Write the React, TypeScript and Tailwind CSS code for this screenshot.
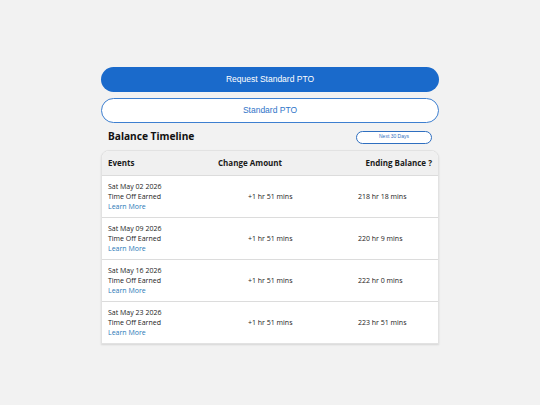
const rows = [
  { date: 'Sat May 02 2026', change: '+1 hr 51 mins', balance: '218 hr 18 mins' },
  { date: 'Sat May 09 2026', change: '+1 hr 51 mins', balance: '220 hr 9 mins' },
  { date: 'Sat May 16 2026', change: '+1 hr 51 mins', balance: '222 hr 0 mins' },
  { date: 'Sat May 23 2026', change: '+1 hr 51 mins', balance: '223 hr 51 mins' },
];

export default function App() {
  return (
    <div className="min-h-[405px] w-[540px] bg-[#f2f2f2] pt-[67px] font-['Open_Sans',sans-serif]">
      <div className="mx-auto w-[338px]">
        <button className="flex h-[25px] w-full items-center justify-center rounded-full bg-[#1a6acb] font-['Liberation_Sans',sans-serif] text-[8.5px] text-white">
          Request Standard PTO
        </button>
        <button className="mt-[6px] flex h-[25px] w-full items-center justify-center rounded-full border border-[#3d7fd0] bg-white font-['Liberation_Sans',sans-serif] text-[8.5px] text-[#2f74c8]">
          Standard PTO
        </button>

        <div className="mt-[4px] flex h-[20px] items-center justify-between px-[7px]">
          <h3 className="font-['Noto_Sans',sans-serif] text-[10.2px] font-bold text-[#111]">Balance Timeline</h3>
          <button className="flex h-[13px] w-[76px] items-center justify-center rounded-full border border-[#2f6fc0] bg-white font-['Liberation_Sans',sans-serif] text-[5px] text-[#2f6fc0]">
            Next 30 Days
          </button>
        </div>

        <div className="mt-[3px] overflow-hidden rounded-t-[8px] border border-[#e2e2e2] bg-white shadow-[0_1px_2px_rgba(0,0,0,0.12)]">
          <div className="flex h-[24px] items-center bg-[#f0f0f0] px-[6px] text-[8px] font-bold text-[#1a1a1a]">
            <span className="w-[110px]">Events</span>
            <span>Change Amount</span>
            <span className="flex-1 text-right">Ending Balance ?</span>
          </div>
          {rows.map((r) => (
            <div
              key={r.date}
              className="flex h-[42px] items-center border-t border-[#dcdcdc] px-[6px] text-[7px] leading-[10px] text-[#222]"
            >
              <div className="w-[140px]">
                <div>{r.date}</div>
                <div>Time Off Earned</div>
                <div className="text-[#2a7ab8]">Learn More</div>
              </div>
              <div className="w-[110px]">{r.change}</div>
              <div className="flex-1">{r.balance}</div>
            </div>
          ))}
        </div>
      </div>
    </div>
  );
}
